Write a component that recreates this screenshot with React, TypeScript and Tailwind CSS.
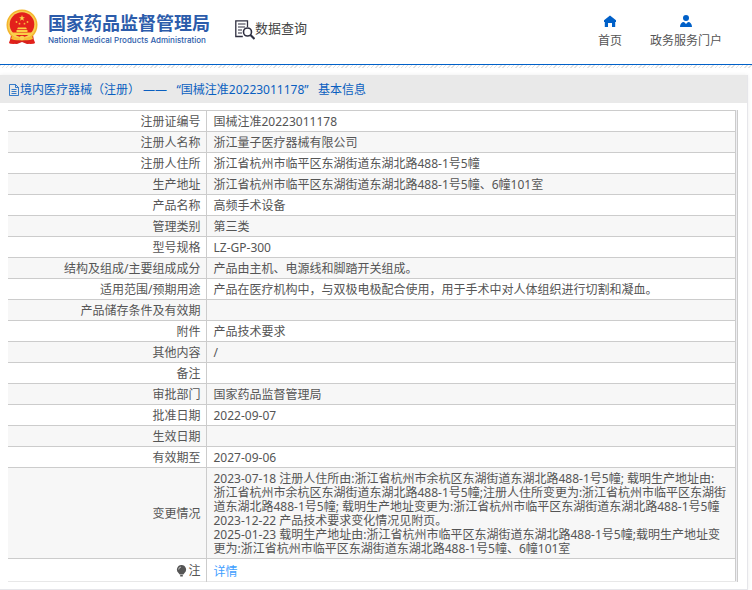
import type { ReactNode } from "react";

type Row = {
  label: string;
  value: ReactNode;
};

const rows: Row[] = [
  { label: "注册证编号", value: "国械注准20223011178" },
  { label: "注册人名称", value: "浙江量子医疗器械有限公司" },
  { label: "注册人住所", value: "浙江省杭州市临平区东湖街道东湖北路488-1号5幢" },
  { label: "生产地址", value: "浙江省杭州市临平区东湖街道东湖北路488-1号5幢、6幢101室" },
  { label: "产品名称", value: "高频手术设备" },
  { label: "管理类别", value: "第三类" },
  { label: "型号规格", value: "LZ-GP-300" },
  { label: "结构及组成/主要组成成分", value: "产品由主机、电源线和脚踏开关组成。" },
  {
    label: "适用范围/预期用途",
    value: "产品在医疗机构中，与双极电极配合使用，用于手术中对人体组织进行切割和凝血。",
  },
  { label: "产品储存条件及有效期", value: "" },
  { label: "附件", value: "产品技术要求" },
  { label: "其他内容", value: "/" },
  { label: "备注", value: "" },
  { label: "审批部门", value: "国家药品监督管理局" },
  { label: "批准日期", value: "2022-09-07" },
  { label: "生效日期", value: "" },
  { label: "有效期至", value: "2027-09-06" },
  {
    label: "变更情况",
    value: (
      <>
        2023-07-18 注册人住所由:浙江省杭州市余杭区东湖街道东湖北路488-1号5幢; 载明生产地址由:
        <br />
        浙江省杭州市余杭区东湖街道东湖北路488-1号5幢;注册人住所变更为:浙江省杭州市临平区东湖街道东湖北路488-1号5幢; 载明生产地址变更为:浙江省杭州市临平区东湖街道东湖北路488-1号5幢
        <br />
        2023-12-22 产品技术要求变化情况见附页。
        <br />
        2025-01-23 载明生产地址由:浙江省杭州市临平区东湖街道东湖北路488-1号5幢;载明生产地址变更为:浙江省杭州市临平区东湖街道东湖北路488-1号5幢、6幢101室
      </>
    ),
  },
];

function Emblem() {
  return (
    <svg className="h-9 w-8" viewBox="0 0 32 36" aria-hidden="true">
      <path d="M5 26L3.500 34.500l7.500.5 5-2 5 2 7.500-.5L27 26z" fill="#d8201c" />
      <circle cx="16" cy="16" r="15.500" fill="#f3b52c" />
      <circle cx="16" cy="16" r="14" fill="#f9cf55" />
      <circle cx="16" cy="15.500" r="12.300" fill="#e3211b" />
      <path d="M16 6l.8 2.200h2.200l-1.800 1.400.7 2.200-1.900-1.400-1.900 1.400.7-2.200L13 8.200h2.200z" fill="#fbd44c" />
      <circle cx="10.500" cy="13" r="0.900" fill="#f7b63c" />
      <circle cx="21.500" cy="13" r="0.900" fill="#f7b63c" />
      <circle cx="13.500" cy="14.700" r="0.900" fill="#f7b63c" />
      <circle cx="18.500" cy="14.700" r="0.900" fill="#f7b63c" />
      <path d="M12 18.500h8l1 1.800H11zM10.500 21h11v2h-11zM6 23.500h20l-2 2.500H8z" fill="#fbcf45" />
      <path d="M6 27q5 2.500 7.500 1.500 2.500-2 5 0Q21 29.500 26 27l1 3q-5 2-8 1l-3-1.500-3 1.500q-3 1-8-1z" fill="#f7bd35" />
      <circle cx="16" cy="29" r="2.300" fill="#f9cf55" />
      <path d="M4 31l5 1-1 3-5-1zM28 31l-5 1 1 3 5-1z" fill="#e3211b" />
    </svg>
  );
}

function QueryIcon() {
  return (
    <svg className="h-5 w-5" viewBox="0 0 20 20" fill="none" stroke="#2f2f40" aria-hidden="true">
      <path d="M12.500 7V.8H.8v15.700h7" strokeWidth="1.300" />
      <path d="M3 4h7.500M3 7h7M3 10h4M3 13h4" strokeWidth="1.200" />
      <circle cx="12.500" cy="12" r="4" strokeWidth="1.600" />
      <path d="M15.500 15l4 4" strokeWidth="2.200" />
    </svg>
  );
}

function HomeIcon() {
  return (
    <svg className="size-3" viewBox="0 0 12 12" fill="#0060c8" aria-hidden="true">
      <path d="M6 .5L0 5.300V7h.8v5H4V8h4v4h3.200V7h.8V5.300z" />
    </svg>
  );
}

function UserIcon() {
  return (
    <svg className="size-3" viewBox="0 0 12 12" fill="#0060c8" aria-hidden="true">
      <circle cx="6" cy="3" r="3" />
      <path d="M0 12c0-3 1.500-5 4-5l2 2 2-2c2.500 0 4 2 4 5z" />
    </svg>
  );
}

function DocIcon() {
  return (
    <svg className="h-3 w-3" viewBox="0 0 12 12" fill="none" stroke="#0a5fc0" aria-hidden="true">
      <path d="M1.500.5h6l3 3v8h-9zM7.500.5v3h3M3.500 5.500h5M3.500 7.500h5M3.500 9.500h5" strokeWidth="0.800" />
    </svg>
  );
}

function BulbIcon() {
  return (
    <svg className="h-3 w-3" viewBox="0 0 12 12" aria-hidden="true">
      <path d="M5.500 0a4.500 4.500 0 0 1 3 7.900L7.300 9.500H3.700L2.500 7.900A4.500 4.500 0 0 1 5.500 0zM4.200 10h2.600v1.500H4.200z" fill="#555" />
      <path d="M2.700 4.500A2.600 2.600 0 0 1 5 2" fill="none" stroke="#ddd" strokeWidth="0.800" />
    </svg>
  );
}

export default function App() {
  return (
    <div className="bg-white font-['Noto_Sans','Noto_Sans_CJK_SC',sans-serif] text-xs leading-[14px] text-[#555]">
      <header className="flex h-[65px] items-start justify-between border-b border-[#0060c8] pr-[30px] pl-[6px]">
        <div className="flex items-start">
          <div className="pt-[9px]">
            <Emblem />
          </div>
          <div className="pt-3 pl-[10px] text-[#2c5cab]">
            <h1 className="text-[18px] leading-[22px] font-bold">国家药品监督管理局</h1>
            <p className="font-['Inter',sans-serif] text-[8px] leading-3 font-medium">
              National Medical Products Administration
            </p>
          </div>
          <div className="flex items-start pt-5 pl-[25px] text-[13px] leading-4 text-[#444]">
            <QueryIcon />
            <span>数据查询</span>
          </div>
        </div>
        <nav className="flex gap-7 pt-[15px]">
          <a href="#" className="flex flex-col items-center gap-[7px]">
            <HomeIcon />
            首页
          </a>
          <a href="#" className="flex flex-col items-center gap-[7px]">
            <UserIcon />
            政务服务门户
          </a>
        </nav>
      </header>
      <div className="h-[3px] bg-[repeating-linear-gradient(135deg,#e2e2e2_0px,#e2e2e2_1px,#fff_1px,#fff_3px)]" />

      <main className="mt-[7px] mr-1 border-r border-b border-[#e6e6ea] pb-[7px] shadow-[0_0_4px_#eee]">
        <h2 className="flex h-7 items-center bg-[#e9e9e9] pt-0.5 pl-2 text-[#0a5fc0]">
          <DocIcon />
          <span className="whitespace-pre">境内医疗器械（注册） ——   “国械注准20223011178”   基本信息</span>
        </h2>
        <div className="mt-[7px] mr-[9px] ml-2 border-r border-[#ccc] bg-[#eeeef2] pr-px">
          <table className="w-full table-fixed border-collapse border-t border-r border-[#ccc] bg-white">
            <colgroup>
              <col className="w-[198px]" />
              <col />
            </colgroup>
            <tbody>
              {rows.map((row) => (
                <tr key={row.label} className="h-[21px] border-b border-[#ccc] even:bg-[#f7f7f7]">
                  <th className="border-r border-[#ccc] px-[5px] pt-1 pb-0.5 text-right font-normal">{row.label}</th>
                  <td className="pt-1 pr-[5px] pb-0.5 pl-[7px]">{row.value}</td>
                </tr>
              ))}
              <tr className="h-[23px] border-b border-[#e8e8e8]">
                <th className="border-r border-[#ccc] px-[5px] pt-1 pb-0.5 font-normal">
                  <span className="flex items-center justify-end">
                    <BulbIcon />注
                  </span>
                </th>
                <td className="pt-[6px] pr-[5px] pb-0.5 pl-[7px]">
                  <a href="#" className="text-[#409eff]">
                    详情
                  </a>
                </td>
              </tr>
            </tbody>
          </table>
        </div>
      </main>
    </div>
  );
}
